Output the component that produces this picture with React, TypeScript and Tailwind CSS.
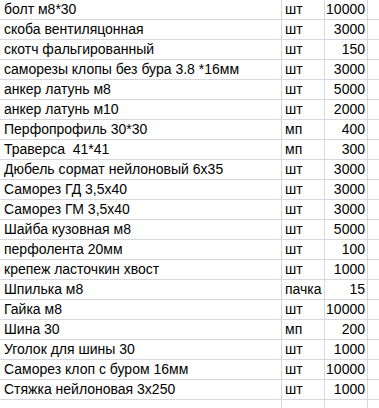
import React from "react";

const rows: [string, string, string][] = [
  ["болт м8*30", "шт", "10000"],
  ["скоба вентиляцонная", "шт", "3000"],
  ["скотч фальгированный", "шт", "150"],
  ["саморезы клопы без бура 3.8 *16мм", "шт", "3000"],
  ["анкер латунь м8", "шт", "5000"],
  ["анкер латунь м10", "шт", "2000"],
  ["Перфопрофиль 30*30", "мп", "400"],
  ["Траверса\u00a0 41*41", "мп", "300"],
  ["Дюбель сормат нейлоновый 6х35", "шт", "3000"],
  ["Саморез ГД 3,5х40", "шт", "3000"],
  ["Саморез ГМ 3,5х40", "шт", "3000"],
  ["Шайба кузовная м8", "шт", "5000"],
  ["перфолента 20мм", "шт", "100"],
  ["крепеж ласточкин хвост", "шт", "1000"],
  ["Шпилька м8", "пачка", "15"],
  ["Гайка м8", "шт", "10000"],
  ["Шина 30", "мп", "200"],
  ["Уголок для шины 30", "шт", "1000"],
  ["Саморез клоп с буром 16мм", "шт", "10000"],
  ["Стяжка нейлоновая 3х250", "шт", "1000"],
  ["", "", ""],
];

export default function App() {
  return (
    <div
      className="w-[379px] h-[408px] overflow-hidden bg-white text-[#000000] text-[14px]"
      style={{ fontFamily: '"Liberation Sans", Arial, sans-serif' }}
    >
      <div className="grid grid-cols-[282px_43px_43px_1fr]">
        {rows.map((r, i) => (
          <React.Fragment key={i}>
            <div className="h-[20px] border-b border-r border-[#d5d8de] pl-[4px] leading-[19px] whitespace-nowrap overflow-visible">
              {r[0]}
            </div>
            <div className="h-[20px] border-b border-r border-[#d5d8de] pl-[3px] leading-[19px] whitespace-nowrap">
              {r[1]}
            </div>
            <div className="h-[20px] border-b border-r border-[#d5d8de] pr-[2px] text-right leading-[19px] whitespace-nowrap">
              {r[2]}
            </div>
            <div className="h-[20px] border-b border-[#d5d8de]"></div>
          </React.Fragment>
        ))}
      </div>
    </div>
  );
}
